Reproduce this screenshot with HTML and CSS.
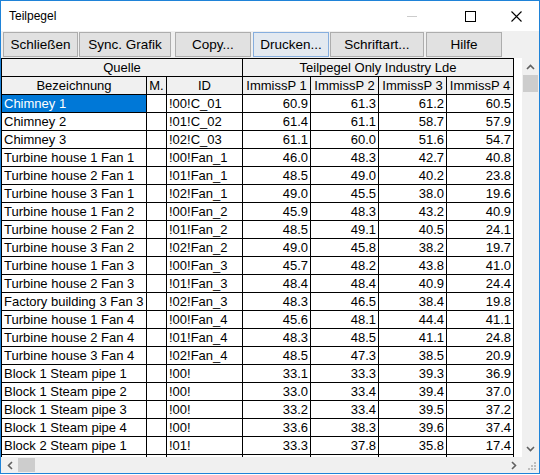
FILE: index.html
```html
<!DOCTYPE html>
<html>
<head>
<meta charset="utf-8">
<link rel="stylesheet" href="styles.css">
</head>
<body>
<div class="window">
  <div class="titlebar">
    <span class="title">Teilpegel</span>
    <div class="caption">
      <span class="cap-min"></span>
      <svg class="cap-max" width="11" height="11" viewBox="0 0 11 11"><rect x="0.5" y="0.5" width="10" height="10" fill="none" stroke="#000" stroke-width="1"/></svg>
      <svg class="cap-close" width="11" height="11" viewBox="0 0 11 11"><path d="M0.5 0.5 L10.5 10.5 M10.5 0.5 L0.5 10.5" stroke="#000" stroke-width="1.1" fill="none"/></svg>
    </div>
  </div>
  <div class="client">
    <div class="toolbar">
      <div class="btn b1">Schließen</div>
      <div class="btn b2">Sync. Grafik</div>
      <div class="btn b3">Copy...</div>
      <div class="btn b4 focus">Drucken...</div>
      <div class="btn b5">Schriftart...</div>
      <div class="btn b6">Hilfe</div>
    </div>
    <div class="view">
      <div class="body">
        <div class="viewport">
          <div class="grid">
            <div class="h span3">Quelle</div>
            <div class="h span4">Teilpegel Only Industry Lde</div>
            <div class="h">Bezeichnung</div><div class="h">M.</div><div class="h">ID</div><div class="h">ImmissP 1</div><div class="h">ImmissP 2</div><div class="h">ImmissP 3</div><div class="h">ImmissP 4</div>

            <div class="t sel">Chimney 1</div><div class="t"></div><div class="t">!00!C_01</div><div class="n">60.9</div><div class="n">61.3</div><div class="n">61.2</div><div class="n">60.5</div>
            <div class="t">Chimney 2</div><div class="t"></div><div class="t">!01!C_02</div><div class="n">61.4</div><div class="n">61.1</div><div class="n">58.7</div><div class="n">57.9</div>
            <div class="t">Chimney 3</div><div class="t"></div><div class="t">!02!C_03</div><div class="n">61.1</div><div class="n">60.0</div><div class="n">51.6</div><div class="n">54.7</div>
            <div class="t">Turbine house 1 Fan 1</div><div class="t"></div><div class="t">!00!Fan_1</div><div class="n">46.0</div><div class="n">48.3</div><div class="n">42.7</div><div class="n">40.8</div>
            <div class="t">Turbine house 2 Fan 1</div><div class="t"></div><div class="t">!01!Fan_1</div><div class="n">48.5</div><div class="n">49.0</div><div class="n">40.2</div><div class="n">23.8</div>
            <div class="t">Turbine house 3 Fan 1</div><div class="t"></div><div class="t">!02!Fan_1</div><div class="n">49.0</div><div class="n">45.5</div><div class="n">38.0</div><div class="n">19.6</div>
            <div class="t">Turbine house 1 Fan 2</div><div class="t"></div><div class="t">!00!Fan_2</div><div class="n">45.9</div><div class="n">48.3</div><div class="n">43.2</div><div class="n">40.9</div>
            <div class="t">Turbine house 2 Fan 2</div><div class="t"></div><div class="t">!01!Fan_2</div><div class="n">48.5</div><div class="n">49.1</div><div class="n">40.5</div><div class="n">24.1</div>
            <div class="t">Turbine house 3 Fan 2</div><div class="t"></div><div class="t">!02!Fan_2</div><div class="n">49.0</div><div class="n">45.8</div><div class="n">38.2</div><div class="n">19.7</div>
            <div class="t">Turbine house 1 Fan 3</div><div class="t"></div><div class="t">!00!Fan_3</div><div class="n">45.7</div><div class="n">48.2</div><div class="n">43.8</div><div class="n">41.0</div>
            <div class="t">Turbine house 2 Fan 3</div><div class="t"></div><div class="t">!01!Fan_3</div><div class="n">48.4</div><div class="n">48.4</div><div class="n">40.9</div><div class="n">24.4</div>
            <div class="t">Factory building 3 Fan 3</div><div class="t"></div><div class="t">!02!Fan_3</div><div class="n">48.3</div><div class="n">46.5</div><div class="n">38.4</div><div class="n">19.8</div>
            <div class="t">Turbine house 1 Fan 4</div><div class="t"></div><div class="t">!00!Fan_4</div><div class="n">45.6</div><div class="n">48.1</div><div class="n">44.4</div><div class="n">41.1</div>
            <div class="t">Turbine house 2 Fan 4</div><div class="t"></div><div class="t">!01!Fan_4</div><div class="n">48.3</div><div class="n">48.5</div><div class="n">41.1</div><div class="n">24.8</div>
            <div class="t">Turbine house 3 Fan 4</div><div class="t"></div><div class="t">!02!Fan_4</div><div class="n">48.5</div><div class="n">47.3</div><div class="n">38.5</div><div class="n">20.9</div>
            <div class="t">Block 1 Steam pipe 1</div><div class="t"></div><div class="t">!00!</div><div class="n">33.1</div><div class="n">33.3</div><div class="n">39.3</div><div class="n">36.9</div>
            <div class="t">Block 1 Steam pipe 2</div><div class="t"></div><div class="t">!00!</div><div class="n">33.0</div><div class="n">33.4</div><div class="n">39.4</div><div class="n">37.0</div>
            <div class="t">Block 1 Steam pipe 3</div><div class="t"></div><div class="t">!00!</div><div class="n">33.2</div><div class="n">33.4</div><div class="n">39.5</div><div class="n">37.2</div>
            <div class="t">Block 1 Steam pipe 4</div><div class="t"></div><div class="t">!00!</div><div class="n">33.6</div><div class="n">38.3</div><div class="n">39.6</div><div class="n">37.4</div>
            <div class="t">Block 2 Steam pipe 1</div><div class="t"></div><div class="t">!01!</div><div class="n">33.3</div><div class="n">37.8</div><div class="n">35.8</div><div class="n">17.4</div>
            <div class="t"></div><div class="t"></div><div class="t"></div><div class="n"></div><div class="n"></div><div class="n"></div><div class="n"></div>
          </div>
        </div>
        <div class="vscroll">
          <div class="arrow"><svg width="9" height="6" viewBox="0 0 9 6"><path d="M1 5 L4.5 1.5 L8 5" fill="none" stroke="#606060" stroke-width="1.6"/></svg></div>
          <div class="vthumb"></div>
          <div class="vtrack"></div>
          <div class="arrow"><svg width="9" height="6" viewBox="0 0 9 6"><path d="M1 1 L4.5 4.5 L8 1" fill="none" stroke="#606060" stroke-width="1.6"/></svg></div>
        </div>
      </div>
      <div class="hbar">
        <div class="hscroll">
          <div class="harrow"><svg width="6" height="9" viewBox="0 0 6 9"><path d="M5 1 L1.5 4.5 L5 8" fill="none" stroke="#606060" stroke-width="1.6"/></svg></div>
          <div class="hthumb"></div>
          <div class="htrack"></div>
          <div class="harrow"><svg width="6" height="9" viewBox="0 0 6 9"><path d="M1 1 L4.5 4.5 L1 8" fill="none" stroke="#606060" stroke-width="1.6"/></svg></div>
        </div>
        <div class="grip">
          <svg width="17" height="16" viewBox="0 0 17 16">
            <rect x="12" y="5" width="2" height="2" fill="#bdbdbd"/>
            <rect x="9" y="8" width="2" height="2" fill="#bdbdbd"/>
            <rect x="12" y="8" width="2" height="2" fill="#bdbdbd"/>
            <rect x="6" y="11" width="2" height="2" fill="#bdbdbd"/>
            <rect x="9" y="11" width="2" height="2" fill="#bdbdbd"/>
            <rect x="12" y="11" width="2" height="2" fill="#bdbdbd"/>
          </svg>
        </div>
      </div>
    </div>
  </div>
</div>
</body>
</html>
```
FILE: styles.css
```css
html, body {
  margin: 0;
  padding: 0;
  background: #ffffff;
}

body {
  font-family: "Liberation Sans", Arial, sans-serif;
  color: #000;
}

.window {
  width: 540px;
  height: 474px;
  box-sizing: border-box;
  border: 1px solid #1f83d8;
  background: #f0f0f0;
  display: flex;
  flex-direction: column;
}

.titlebar {
  flex: none;
  height: 30px;
  background: #ffffff;
  display: flex;
  align-items: center;
  padding-left: 8px;
}

.title {
  font-size: 12px;
  color: #000;
}

.caption {
  margin-left: auto;
  display: flex;
  align-items: center;
  padding-right: 17px;
}

.cap-min {
  width: 10px;
  height: 1px;
  background: #cccccc;
}

.cap-max {
  margin-left: 48px;
  display: block;
}

.cap-close {
  margin-left: 35px;
  display: block;
}

.client {
  flex: 1;
  display: flex;
  flex-direction: column;
  min-height: 0;
}

.toolbar {
  flex: none;
  height: 27px;
  box-sizing: border-box;
  padding-top: 1px;
  display: flex;
  align-items: flex-start;
}

.btn {
  height: 25px;
  box-sizing: border-box;
  border: 1px solid #adadad;
  background: #e1e1e1;
  font-size: 13.5px;
  line-height: 23px;
  text-align: center;
  white-space: nowrap;
}

.btn.focus {
  border-color: #86aede;
  background: #e3e9f0;
}

.b1 { width: 75px; margin-left: 2px; }
.b2 { width: 92px; margin-left: 1px; }
.b3 { width: 76px; margin-left: 4px; }
.b4 { width: 76px; margin-left: 2px; }
.b5 { width: 94px; margin-left: 1px; }
.b6 { width: 76px; margin-left: 2px; }

.view {
  flex: 1;
  display: flex;
  flex-direction: column;
  min-height: 0;
}

.body {
  flex: none;
  height: 399px;
  display: flex;
}

.viewport {
  width: 521px;
  height: 399px;
  background: #ffffff;
  overflow: hidden;
}

.grid {
  display: grid;
  width: max-content;
  grid-template-columns: 144px 19px 75px 67px 67px 67px 66px;
  grid-auto-rows: 17px;
  gap: 1px;
  border: 1px solid #000;
  background: #000;
  font-size: 13px;
  line-height: 17px;
}

.grid > div {
  white-space: nowrap;
  overflow: hidden;
  background: #ffffff;
}

.grid .h {
  background: #f0f0f0;
  text-align: center;
}

.grid .span3 { grid-column: span 3; }
.grid .span4 { grid-column: span 4; }

.grid .t {
  padding-left: 2px;
}

.grid .n {
  text-align: right;
  padding-right: 2px;
}

.grid .sel {
  background: #0078d7;
  color: #ffffff;
}

.vscroll {
  width: 17px;
  display: flex;
  flex-direction: column;
  background: #f0f0f0;
}

.arrow {
  flex: none;
  height: 17px;
  display: flex;
  align-items: center;
  justify-content: center;
}

.vthumb {
  flex: none;
  height: 17px;
  margin: 0 1px;
  background: #cdcdcd;
}

.vtrack {
  flex: 1;
}

.hbar {
  flex: 1;
  display: flex;
}

.hscroll {
  width: 521px;
  display: flex;
  background: #f0f0f0;
}

.harrow {
  flex: none;
  width: 17px;
  display: flex;
  align-items: center;
  justify-content: center;
}

.hthumb {
  flex: none;
  width: 17px;
  margin: 1px 0;
  background: #cdcdcd;
}

.htrack {
  flex: 1;
}

.grip {
  width: 17px;
  display: flex;
  align-items: flex-end;
}

.grip svg {
  display: block;
}
```
